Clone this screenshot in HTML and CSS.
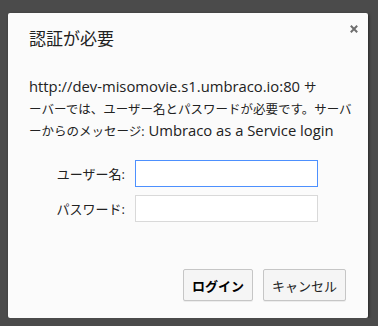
FILE: index.html
```html
<!DOCTYPE html>
<html lang="ja">
<head>
    <meta charset="UTF-8">
    <title>認証が必要</title>
    <link rel="stylesheet" href="styles.css">
</head>
<body>
    <div class="dialog">
        <div class="dialog-head">
            <h1>認証が必要</h1>
            <svg class="close" width="8" height="8" viewBox="0 0 8 8">
                <path d="M0.8 0.8L7.2 7.2M7.2 0.8L0.8 7.2" stroke="#6e6e6e" stroke-width="2"/>
            </svg>
        </div>
        <p class="message">http://dev-misomovie.s1.umbraco.io:80 <span class="ja">サ</span><br><span class="ja">ーバーでは、ユーザー名とパスワードが必要です。サーバ</span><br><span class="ja">ーからのメッセージ:</span> Umbraco as a Service login</p>
        <div class="form">
            <label for="user">ユーザー名:</label>
            <input id="user" class="field focused" type="text">
            <label for="pass">パスワード:</label>
            <input id="pass" class="field" type="password">
        </div>
        <div class="buttons">
            <button class="btn primary">ログイン</button>
            <button class="btn">キャンセル</button>
        </div>
    </div>
</body>
</html>
```

FILE: styles.css
```css
body {
    margin: 0;
    background: #4b4b4b;
    font-family: "Open Sans", "Noto Sans CJK JP", sans-serif;
    color: #222;
}
.dialog {
    width: 360px;
    height: 305px;
    margin: 13px 0 0 8px;
    background: #fbfbfb;
    border-radius: 2px;
    box-shadow: 1px 1px 3px rgba(0,0,0,0.5);
    box-sizing: border-box;
    padding: 14px 20px 0 21px;
}
.dialog-head {
    display: flex;
    justify-content: space-between;
    align-items: flex-start;
}
.dialog-head h1 {
    margin: 0;
    font-size: 17px;
    font-weight: normal;
    line-height: 24px;
    color: #222;
}
.close {
    margin: -2px -10px 0 0;
}
.message {
    margin: 25px 0 0 0;
    font-size: 14.8px;
    line-height: 20px;
    color: #222;
    white-space: nowrap;
}
.message .ja {
    font-size: 12.5px;
}
.form {
    display: grid;
    grid-template-columns: 96px 183px;
    column-gap: 10px;
    row-gap: 8px;
    align-items: center;
    margin-top: 18px;
}
.form label {
    text-align: right;
    font-size: 13px;
}
.field {
    height: 27px;
    box-sizing: border-box;
    border: 1px solid #d9d9d9;
    background: #fff;
    margin: 0;
    outline: none;
}
.field.focused {
    border-color: #4d90fe;
}
.buttons {
    display: flex;
    justify-content: flex-end;
    gap: 10px;
    margin: 47px 2px 0 0;
}
.btn {
    height: 32px;
    padding: 0 8px;
    font-family: "Open Sans", "Noto Sans CJK JP", sans-serif;
    font-size: 13px;
    color: #222;
    background: #f5f5f5;
    border: 1px solid #c6c6c6;
    border-radius: 2px;
    box-shadow: 0 1px 0 rgba(0,0,0,0.06);
}
.btn.primary {
    font-weight: bold;
    color: #000;
}
```
